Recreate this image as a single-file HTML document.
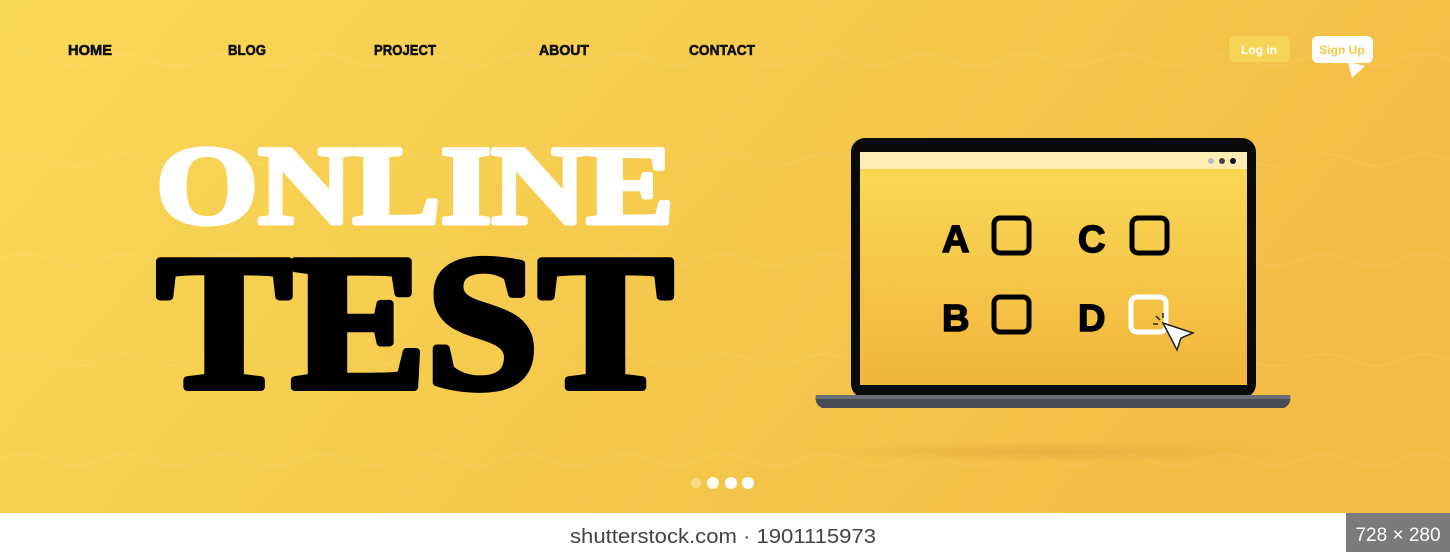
<!DOCTYPE html>
<html><head><meta charset="utf-8"><style>
html,body{margin:0;padding:0;width:1450px;height:552px;overflow:hidden;background:#fff}
</style></head><body>
<svg width="1450" height="552" viewBox="0 0 1450 552" xmlns="http://www.w3.org/2000/svg">
<defs>
<linearGradient id="bg" x1="0" y1="0" x2="1" y2="0.3">
<stop offset="0" stop-color="#f8d957"/><stop offset="1" stop-color="#f3bd45"/></linearGradient>
<linearGradient id="scr" x1="0" y1="0" x2="0" y2="1">
<stop offset="0" stop-color="#f9da55"/><stop offset="1" stop-color="#f2b53c"/></linearGradient>
<radialGradient id="sh"><stop offset="0" stop-color="#d9a23a" stop-opacity=".5"/><stop offset="1" stop-color="#d9a23a" stop-opacity="0"/></radialGradient>
</defs>
<rect width="1450" height="513" fill="url(#bg)"/>
<g fill="none" stroke="#fff" stroke-opacity=".07" stroke-width="2">
<path d="M0 60 q25 -12 50 0 t50 0 t50 0 t50 0 t50 0 t50 0 t50 0 t50 0 t50 0 t50 0 t50 0 t50 0 t50 0 t50 0 t50 0 t50 0 t50 0 t50 0 t50 0 t50 0 t50 0 t50 0 t50 0 t50 0 t50 0 t50 0 t50 0 t50 0 t50 0 t50 0" />
<path d="M0 160 q25 -12 50 0 t50 0 t50 0 t50 0 t50 0 t50 0 t50 0 t50 0 t50 0 t50 0 t50 0 t50 0 t50 0 t50 0 t50 0 t50 0 t50 0 t50 0 t50 0 t50 0 t50 0 t50 0 t50 0 t50 0 t50 0 t50 0 t50 0 t50 0 t50 0 t50 0" />
<path d="M0 260 q25 -12 50 0 t50 0 t50 0 t50 0 t50 0 t50 0 t50 0 t50 0 t50 0 t50 0 t50 0 t50 0 t50 0 t50 0 t50 0 t50 0 t50 0 t50 0 t50 0 t50 0 t50 0 t50 0 t50 0 t50 0 t50 0 t50 0 t50 0 t50 0 t50 0 t50 0" />
<path d="M0 360 q25 -12 50 0 t50 0 t50 0 t50 0 t50 0 t50 0 t50 0 t50 0 t50 0 t50 0 t50 0 t50 0 t50 0 t50 0 t50 0 t50 0 t50 0 t50 0 t50 0 t50 0 t50 0 t50 0 t50 0 t50 0 t50 0 t50 0 t50 0 t50 0 t50 0 t50 0" />
<path d="M0 460 q25 -12 50 0 t50 0 t50 0 t50 0 t50 0 t50 0 t50 0 t50 0 t50 0 t50 0 t50 0 t50 0 t50 0 t50 0 t50 0 t50 0 t50 0 t50 0 t50 0 t50 0 t50 0 t50 0 t50 0 t50 0 t50 0 t50 0 t50 0 t50 0 t50 0 t50 0" />
</g>
<g font-family="Liberation Sans, sans-serif" font-weight="bold" font-size="15" fill="#111" stroke="#111" stroke-width="0.6">
<text x="68" y="55" textLength="44" lengthAdjust="spacingAndGlyphs">HOME</text>
<text x="228" y="55" textLength="38" lengthAdjust="spacingAndGlyphs">BLOG</text>
<text x="374" y="55" textLength="62" lengthAdjust="spacingAndGlyphs">PROJECT</text>
<text x="539" y="55" textLength="50" lengthAdjust="spacingAndGlyphs">ABOUT</text>
<text x="689" y="55" textLength="66" lengthAdjust="spacingAndGlyphs">CONTACT</text>
</g>
<rect x="1229" y="36" width="61" height="26" rx="6" fill="#f7d456"/>
<text x="1259" y="54" text-anchor="middle" font-family="Liberation Sans, sans-serif" font-weight="bold" font-size="12" fill="#fff">Log in</text>
<rect x="1312" y="36" width="61" height="27" rx="6" fill="#fff"/>
<path d="M1348 62 L1352 78 L1365 66 Z" fill="#fff"/>
<text x="1342" y="54" text-anchor="middle" font-family="Liberation Sans, sans-serif" font-weight="bold" font-size="12" fill="#f5c844">Sign Up</text>
<text x="156" y="223" font-family="Liberation Serif, serif" font-weight="bold" font-size="112" fill="#fff" stroke="#fff" stroke-width="5" stroke-linejoin="round" textLength="518" lengthAdjust="spacingAndGlyphs">ONLINE</text>
<text x="157" y="387" font-family="Liberation Serif, serif" font-weight="bold" font-size="192" fill="#000" stroke="#000" stroke-width="8" stroke-linejoin="round" textLength="516" lengthAdjust="spacingAndGlyphs">TEST</text>
<ellipse cx="1050" cy="452" rx="230" ry="10" fill="url(#sh)"/>
<rect x="851" y="138" width="405" height="260" rx="14" fill="#0a0a0a"/>
<rect x="860" y="152" width="387" height="233" fill="url(#scr)"/>
<rect x="860" y="152" width="387" height="17" fill="#fcedb3"/>
<circle cx="1211" cy="161" r="3" fill="#bbb"/><circle cx="1222" cy="161" r="3" fill="#444"/><circle cx="1233" cy="161" r="3" fill="#111"/>
<path d="M816 395 H1290 Q1292 404 1284 408 H822 Q814 404 816 395 Z" fill="#4a4c55"/>
<rect x="816" y="395" width="474" height="4" fill="#6b6d76"/>
<g font-family="Liberation Sans, sans-serif" font-weight="bold" font-size="38" fill="#000" stroke="#000" stroke-width="1.5">
<text x="942" y="252">A</text><text x="1078" y="252">C</text>
<text x="942" y="331">B</text><text x="1078" y="331">D</text>
</g>
<g fill="none" stroke="#000" stroke-width="5">
<rect x="994" y="218" width="35" height="35" rx="6"/>
<rect x="1132" y="218" width="35" height="35" rx="6"/>
<rect x="994" y="297" width="35" height="35" rx="6"/>
</g>
<rect x="1131" y="297" width="35" height="35" rx="6" fill="none" stroke="#fff" stroke-width="5"/>
<path d="M1163 323 L1193 333 L1181 338 L1177 350 Z" fill="#fff" stroke="#222" stroke-width="1.5"/>
<g stroke="#222" stroke-width="1.5"><path d="M1160 320 l-4 -4 M1163 318 v-5 M1158 324 h-5"/></g>
<circle cx="696" cy="483" r="5" fill="#fff" opacity=".35"/>
<circle cx="713" cy="483" r="6" fill="#fff" opacity=".9"/>
<circle cx="731" cy="483" r="6" fill="#fff"/>
<circle cx="748" cy="483" r="6" fill="#fff"/>
<rect y="513" width="1450" height="39" fill="#fff"/>
<text x="570" y="543" font-family="Liberation Sans, sans-serif" font-size="20" fill="#444" textLength="306" lengthAdjust="spacingAndGlyphs">shutterstock.com · 1901115973</text>
<rect x="1346" y="513" width="104" height="39" fill="#7b7b7b"/>
<text x="1398" y="541" text-anchor="middle" font-family="Liberation Sans, sans-serif" font-size="19" fill="#fff">728 × 280</text>
</svg>
</body></html>
